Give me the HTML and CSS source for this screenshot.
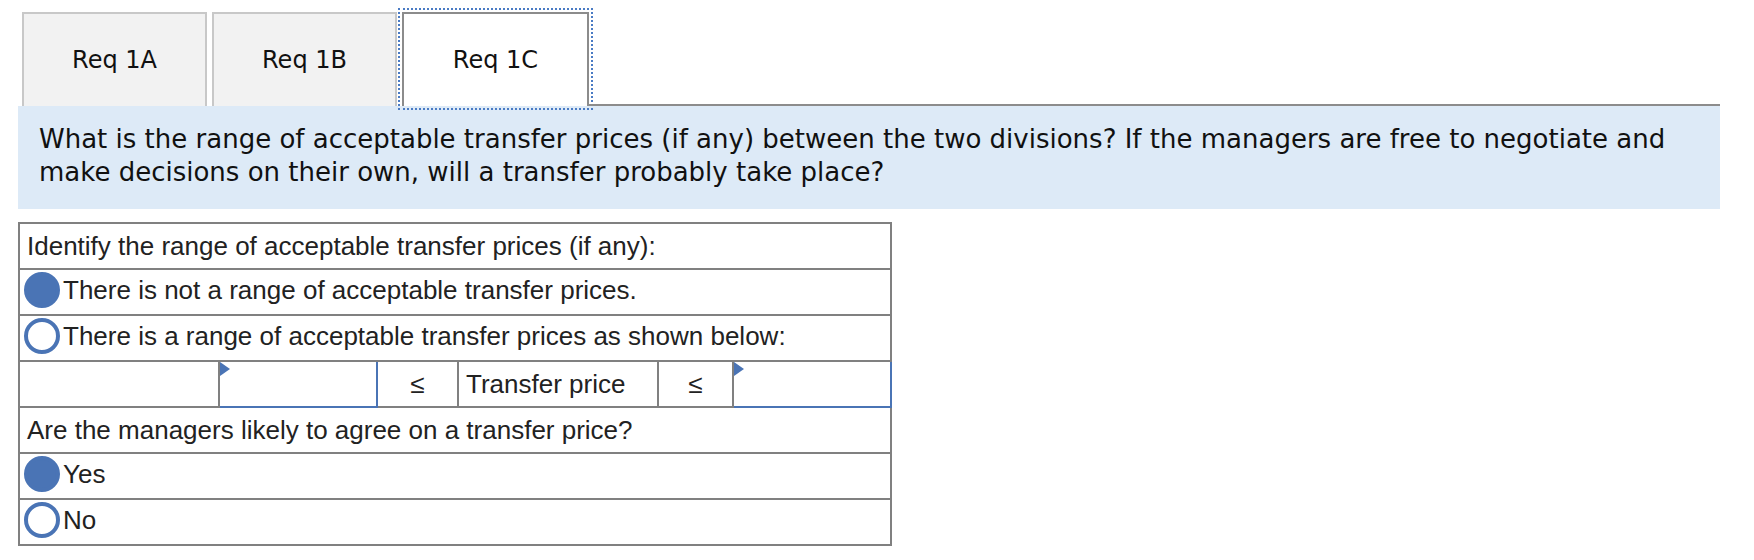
FILE: index.html
```html
<!DOCTYPE html>
<html>
<head>
<meta charset="utf-8">
<link rel="stylesheet" href="styles.css">
</head>
<body>
<div class="page">
  <div class="tabs">
    <div class="tab">Req 1A</div>
    <div class="tab">Req 1B</div>
    <div class="tab active">Req 1C</div>
    <div class="tab-fill"></div>
  </div>
  <div class="question">What is the range of acceptable transfer prices (if any) between the two divisions? If the managers are free to negotiate and make decisions on their own, will a transfer probably take place?</div>
  <table class="answer">
    <colgroup>
      <col class="c1"><col class="c2"><col class="c3"><col class="c4"><col class="c5"><col class="c6">
    </colgroup>
    <tr><td colspan="6" class="txt">Identify the range of acceptable transfer prices (if any):</td></tr>
    <tr><td colspan="6" class="opt"><span class="radio on"></span>There is not a range of acceptable transfer prices.</td></tr>
    <tr><td colspan="6" class="opt"><span class="radio"></span>There is a range of acceptable transfer prices as shown below:</td></tr>
    <tr class="inrow">
      <td></td>
      <td class="input"><span class="flag"></span></td>
      <td class="sym">≤</td>
      <td class="txt">Transfer price</td>
      <td class="sym">≤</td>
      <td class="input"><span class="flag"></span></td>
    </tr>
    <tr><td colspan="6" class="txt">Are the managers likely to agree on a transfer price?</td></tr>
    <tr><td colspan="6" class="opt"><span class="radio on"></span>Yes</td></tr>
    <tr><td colspan="6" class="opt"><span class="radio"></span>No</td></tr>
  </table>
</div>
</body>
</html>
```
FILE: styles.css
```css
html, body {
  margin: 0;
  padding: 0;
  background: #ffffff;
}
.page {
  padding: 8px 34px 0 18px;
}
.tabs {
  display: flex;
  align-items: flex-end;
  padding-top: 4px;
  padding-left: 4px;
  height: 94px;
}
.tab {
  box-sizing: border-box;
  width: 185px;
  height: 94px;
  margin-right: 5px;
  background: #f2f2f2;
  border: 2px solid #c8c8c8;
  border-bottom: none;
  display: flex;
  align-items: center;
  justify-content: center;
  font-family: "DejaVu Sans", Verdana, sans-serif;
  font-size: 24px;
  color: #111;
}
.tab.active {
  width: 187px;
  margin-right: 0;
  background: #ffffff;
  border-color: #8c8c8c;
  outline: 2px dotted #4a7bc4;
  outline-offset: 2px;
}
.tab-fill {
  flex: 1;
  height: 94px;
  box-sizing: border-box;
  border-bottom: 2px solid #8c8c8c;
}
.question {
  background: #ddeaf7;
  padding: 17px 20px 20px 21px;
  font-family: "DejaVu Sans", Verdana, sans-serif;
  font-size: 26px;
  line-height: 33px;
  color: #111;
}
.answer {
  margin-top: 13px;
  width: 874px;
  table-layout: fixed;
  border-collapse: collapse;
  border: 2px solid #808080;
  font-family: "Liberation Sans", Arial, sans-serif;
  font-size: 26px;
  color: #222;
}
.c1 { width: 200px; }
.c2 { width: 158px; }
.c3 { width: 81px; }
.c4 { width: 200px; }
.c5 { width: 75px; }
.c6 { width: 158px; }
.answer td {
  border: 2px solid #808080;
  height: 46px;
  padding: 0;
  box-sizing: border-box;
}
.answer td.txt {
  padding-left: 7px;
}
.answer td.opt {
  padding-left: 4px;
}
.opt {
  white-space: nowrap;
}
.radio {
  display: inline-block;
  box-sizing: border-box;
  width: 36px;
  height: 36px;
  border-radius: 50%;
  border: 4px solid #4a74b5;
  background: #fff;
  vertical-align: middle;
  margin-right: 3px;
  position: relative;
  top: -2px;
}
.radio.on {
  background: #4a74b5;
}
.answer td.input {
  position: relative;
  border: 2px solid #4a74b5;
}
.flag {
  position: absolute;
  left: 0;
  top: 0;
  width: 0;
  height: 0;
  border-left: 10px solid #4a74b5;
  border-top: 7px solid transparent;
  border-bottom: 7px solid transparent;
}
.answer td.sym {
  text-align: center;
}
```
